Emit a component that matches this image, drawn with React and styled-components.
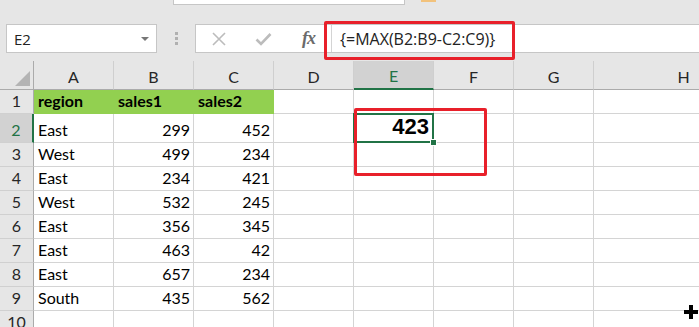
import React from 'react';
import styled, { createGlobalStyle } from 'styled-components';

const GlobalStyle = createGlobalStyle`
  html, body {
    margin: 0;
    padding: 0;
    background: #e6e6e6;
  }
  body {
    font-family: Lato, "Open Sans", sans-serif;
  }
`;

const Window = styled.div`
  position: relative;
  width: 699px;
  height: 327px;
  overflow: hidden;
  background: #e6e6e6;
`;

const RibbonEdge = styled.div`
  display: flex;
  align-items: flex-start;
  height: 24px;
`;

const RibbonBox = styled.div`
  margin-left: 173px;
  width: 230px;
  height: 4px;
  background: #fff;
  border: 1px solid #c6c6c6;
  border-top: none;
`;

const RibbonMark = styled.div`
  margin-left: 16px;
  width: 15px;
  height: 2px;
  background: #f2c27c;
`;

const FormulaBar = styled.div`
  display: flex;
  height: 29px;
  padding-left: 6px;
`;

const NameBox = styled.div`
  box-sizing: border-box;
  width: 151px;
  display: flex;
  align-items: center;
  justify-content: space-between;
  padding: 0 7px 0 7px;
  background: #fff;
  border: 1px solid #c6c6c6;
  font: 15px "Open Sans", sans-serif;
  color: #222;
`;

const Caret = styled.span`
  width: 0;
  height: 0;
  border-left: 4px solid transparent;
  border-right: 4px solid transparent;
  border-top: 4px solid #777;
`;

const Grip = styled.div`
  width: 38px;
  display: flex;
  flex-direction: column;
  align-items: center;
  justify-content: center;
  gap: 2px;

  span {
    width: 3px;
    height: 3px;
    background: #b0b0b0;
  }
`;

const FormulaBox = styled.div`
  flex: 1;
  display: flex;
  background: #fff;
  border: 1px solid #c6c6c6;
  border-right: none;
`;

const Buttons = styled.div`
  display: flex;
  width: 136px;
  box-sizing: border-box;
  border-right: 1px solid #d4d4d4;
`;

const IconSlot = styled.div`
  width: 45px;
  display: flex;
  align-items: center;
  justify-content: center;
  color: ${(p) => p.$color || '#bcbcbc'};
`;

const Fx = styled.span`
  font: italic bold 18px "Liberation Serif", serif;
  color: #6b6b6b;
  letter-spacing: -1px;
`;

const FormulaText = styled.div`
  display: flex;
  align-items: center;
  padding-left: 8px;
  font: 16px "Open Sans", sans-serif;
  color: #222;
`;

const Sheet = styled.div`
  margin-top: 8px;
  display: grid;
  grid-template-columns: 34px repeat(7, 80px) 180px;
  grid-template-rows: 29px 24px 29px repeat(8, 24px);
`;

const HeaderCell = styled.div`
  box-sizing: border-box;
  display: flex;
  align-items: flex-end;
  justify-content: center;
  padding-bottom: 3px;
  background: ${(p) => (p.$active ? '#d2d2d2' : '#e6e6e6')};
  color: ${(p) => (p.$active ? '#217346' : '#262626')};
  border-right: 1px solid #cfcfcf;
  border-bottom: ${(p) => (p.$active ? '2px solid #217346' : '1px solid #ababab')};
  font-size: 16px;
  line-height: 18px;
`;

const Corner = styled.div`
  box-sizing: border-box;
  display: flex;
  align-items: flex-end;
  justify-content: flex-end;
  padding: 0 3px 3px 0;
  border-right: 1px solid #ababab;
  border-bottom: 1px solid #ababab;
`;

const RowHead = styled.div`
  box-sizing: border-box;
  display: flex;
  align-items: flex-end;
  justify-content: center;
  padding-bottom: 3px;
  background: ${(p) => (p.$active ? '#d2d2d2' : '#e6e6e6')};
  color: ${(p) => (p.$active ? '#217346' : '#262626')};
  border-bottom: 1px solid #d0d0d0;
  border-right: ${(p) => (p.$active ? '2px solid #217346' : '1px solid #ababab')};
  font-size: 16px;
  line-height: 18px;
`;

const Cell = styled.div`
  position: relative;
  box-sizing: border-box;
  display: flex;
  align-items: flex-end;
  justify-content: ${(p) => (p.$right ? 'flex-end' : 'flex-start')};
  padding: 0 3px 3px 4px;
  background: ${(p) => p.$fill || '#fff'};
  border-right: 1px solid ${(p) => p.$fill || '#d4d4d4'};
  border-bottom: 1px solid ${(p) => p.$fill || '#d4d4d4'};
  font-size: 16px;
  line-height: 18px;
  font-weight: ${(p) => (p.$bold ? 700 : 400)};
  color: #000;
  white-space: nowrap;

  ${(p) =>
    p.$selected &&
    `
    &::after {
      content: '';
      position: absolute;
      top: -1px;
      left: -1px;
      right: -1px;
      bottom: -1px;
      border: 2px solid #217346;
      pointer-events: none;
    }
  `}
`;

const BigValue = styled.span`
  font: bold 22px/24px "Liberation Sans", Arial, sans-serif;
  padding-right: 1px;
`;

const FillHandle = styled.span`
  position: absolute;
  right: -4px;
  bottom: -4px;
  width: 5px;
  height: 5px;
  background: #217346;
  border: 1px solid #fff;
  z-index: 2;
`;

const Annotation = styled.div`
  position: absolute;
  left: ${(p) => p.$x}px;
  top: ${(p) => p.$y}px;
  width: ${(p) => p.$w}px;
  height: ${(p) => p.$h}px;
  box-sizing: border-box;
  border: 3px solid #e8202a;
  border-radius: 2px;
  pointer-events: none;
`;

const Pointer = styled.svg`
  position: absolute;
  left: 684px;
  top: 305px;
`;

const columns = ['A', 'B', 'C', 'D', 'E', 'F', 'G', 'H'];

const rows = [
  ['East', 299, 452],
  ['West', 499, 234],
  ['East', 234, 421],
  ['West', 532, 245],
  ['East', 356, 345],
  ['East', 463, 42],
  ['East', 657, 234],
  ['South', 435, 562],
  null,
];

const GREEN = '#92d050';

function EmptyCells({ from, row }) {
  return columns.slice(from).map((c) => <Cell key={c + row} />);
}

export default function App() {
  return (
    <>
      <GlobalStyle />
      <Window>
        <RibbonEdge>
          <RibbonBox />
          <RibbonMark />
        </RibbonEdge>

        <FormulaBar>
          <NameBox>
            E2
            <Caret />
          </NameBox>
          <Grip>
            <span />
            <span />
            <span />
          </Grip>
          <FormulaBox>
            <Buttons>
              <IconSlot>
                <svg width="14" height="14" viewBox="0 0 14 14">
                  <path d="M1 1 L13 13 M13 1 L1 13" stroke="currentColor" strokeWidth="1.6" fill="none" />
                </svg>
              </IconSlot>
              <IconSlot>
                <svg width="17" height="14" viewBox="0 0 17 14">
                  <path d="M1.5 7.5 L6 12 L15.5 2" stroke="currentColor" strokeWidth="2.6" fill="none" />
                </svg>
              </IconSlot>
              <IconSlot>
                <Fx>fx</Fx>
              </IconSlot>
            </Buttons>
            <FormulaText>{'{=MAX(B2:B9-C2:C9)}'}</FormulaText>
          </FormulaBox>
        </FormulaBar>

        <Sheet>
          <Corner>
            <svg width="15" height="15" viewBox="0 0 15 15">
              <polygon points="15,0 15,15 0,15" fill="#b4b4b4" />
            </svg>
          </Corner>
          {columns.map((c) => (
            <HeaderCell key={c} $active={c === 'E'}>
              {c}
            </HeaderCell>
          ))}

          <RowHead>1</RowHead>
          <Cell $fill={GREEN} $bold>region</Cell>
          <Cell $fill={GREEN} $bold>sales1</Cell>
          <Cell $fill={GREEN} $bold>sales2</Cell>
          <EmptyCells from={3} row={1} />

          {rows.map((r, i) => {
            const n = i + 2;
            return (
              <React.Fragment key={n}>
                <RowHead $active={n === 2}>{n}</RowHead>
                {r ? (
                  <>
                    <Cell>{r[0]}</Cell>
                    <Cell $right>{r[1]}</Cell>
                    <Cell $right>{r[2]}</Cell>
                  </>
                ) : (
                  <EmptyCells from={0} row={n} />
                )}
                {r && n === 2 ? (
                  <>
                    <Cell />
                    <Cell $right $selected>
                      <BigValue>423</BigValue>
                      <FillHandle />
                    </Cell>
                    <Cell />
                    <Cell />
                    <Cell />
                  </>
                ) : (
                  r && <EmptyCells from={3} row={n} />
                )}
              </React.Fragment>
            );
          })}
        </Sheet>

        <Annotation $x={324} $y={21} $w={191} $h={39} />
        <Annotation $x={354} $y={108} $w={133} $h={68} />

        <Pointer width="14" height="14" viewBox="0 0 14 14">
          <path d="M5 0 H9 V5 H14 V9 H9 V14 H5 V9 H0 V5 H5 Z" fill="#000" />
        </Pointer>
      </Window>
    </>
  );
}
